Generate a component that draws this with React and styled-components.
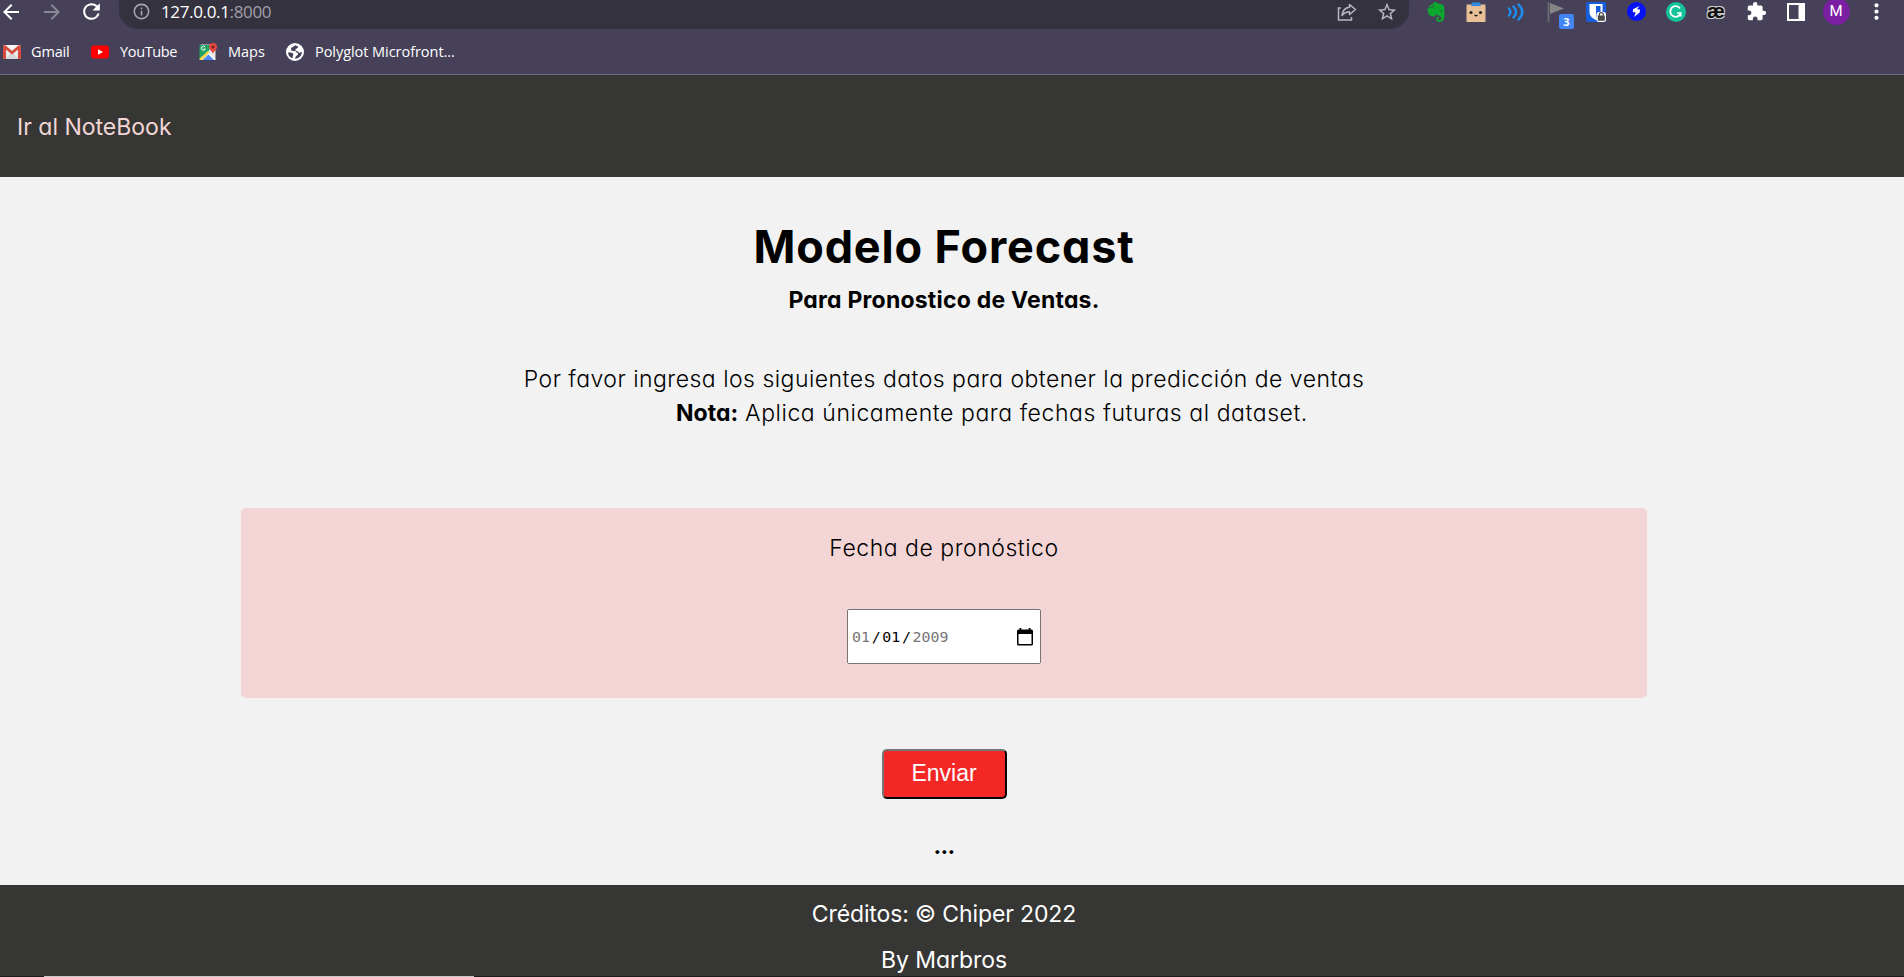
import React from "react";
import styled, { createGlobalStyle } from "styled-components";
import { MdArrowBack, MdArrowForward, MdRefresh, MdInfoOutline, MdStarBorder, MdExtension, MdMoreVert } from "react-icons/md";
import { SiEvernote } from "react-icons/si";

const Global = createGlobalStyle`
  * { box-sizing: border-box; }
  html, body { margin: 0; background: #f2f2f2; overflow: hidden; }
`;

const Page = styled.div`
  height: 977px;
  display: flex;
  flex-direction: column;
  overflow: hidden;
  font-family: Inter, "Open Sans", sans-serif;
  font-feature-settings: "cv11";
  color: #000;
`;

const Chrome = styled.div`
  height: 75px;
  flex: none;
  background: #464159;
  border-bottom: 1px solid #706c7d;
  font-family: "Open Sans", "Noto Sans", sans-serif;
  font-feature-settings: normal;
  color: #fff;
`;
const Toolbar = styled.div`
  height: 29px;
  display: flex;
  align-items: flex-start;
`;
const Cell = styled.div`
  width: ${(p) => p.$w || 40}px;
  height: 23px;
  flex: none;
  display: flex;
  align-items: center;
  justify-content: center;
  color: ${(p) => p.$color || "#fff"};
  position: relative;
  svg { flex: none; display: block; }
`;
const NavButtons = styled.div`
  width: 119px;
  display: flex;
  padding-left: 1px;
  flex: none;
`;
const Omnibox = styled.div`
  width: 1290px;
  height: 29px;
  border-radius: 0 0 20px 20px / 0 0 18px 18px;
  background: #35323f;
  display: flex;
  margin-right: 7px;
  padding: 0 2px 0 10px;
`;
const Url = styled.div`
  flex: 1;
  padding-left: 8px;
  font-size: 17px;
  line-height: 23px;
  letter-spacing: -0.35px;
  span { color: #a19fa8; }
`;
const Badge = styled.span`
  position: absolute;
  left: 23px;
  top: 14px;
  width: 15px;
  height: 15px;
  border-radius: 2px;
  background: #4285f4;
  font-size: 11px;
  font-weight: 700;
  line-height: 16px;
  text-align: center;
  color: #fff;
`;
const Avatar = styled.span`
  width: 27px;
  height: 27px;
  flex: none;
  border-radius: 50%;
  background: #7b1fa2;
  font: 15px/27px Roboto, sans-serif;
  text-align: center;
`;
const Bookmarks = styled.div`
  height: 45px;
  display: flex;
  align-items: center;
  padding: 1px 0 0 2px;
`;
const Bookmark = styled.div`
  display: flex;
  align-items: center;
  width: ${(p) => p.$w}px;
  gap: ${(p) => p.$gap || 10}px;
  font-size: 14.5px;
  line-height: 20px;
  letter-spacing: ${(p) => p.$ls || 0}px;
  white-space: nowrap;
  svg { flex: none; }
`;

const Header = styled.header`
  height: 102px;
  flex: none;
  background: #363634;
  padding: 35px 0 0 17px;
`;
const Line = styled.p`
  margin: ${(p) => p.$mt || 0}px 0 0;
  font-size: 23px;
  line-height: 34px;
  font-weight: ${(p) => p.$weight || 400};
  letter-spacing: ${(p) => p.$ls || 0}px;
  padding-left: ${(p) => p.$shift || 0}px;
  white-space: nowrap;
  text-align: center;
  b { font-weight: 700; letter-spacing: 0; }
`;
const NotebookLink = styled.a`
  display: block;
  font-size: 23px;
  line-height: 34px;
  color: #f3d6d6;
`;
const Main = styled.main`
  height: 708px;
  flex: none;
  background: #f2f2f2;
  padding: 40px 16px 0 0;
  display: flex;
  flex-direction: column;
  align-items: center;
`;
const Title = styled.h1`
  margin: 0;
  font-size: 45px;
  line-height: 60px;
  font-weight: 700;
  letter-spacing: 0.85px;
`;
const Subtitle = styled.h2`
  margin: 3px 0 0;
  font-size: 23px;
  line-height: 40px;
  font-weight: 700;
  letter-spacing: 0.22px;
`;
const Card = styled.section`
  width: 1406px;
  height: 190px;
  margin-top: 78px;
  padding-top: 23px;
  border-radius: 5px;
  background: #f3d5d5;
  display: flex;
  flex-direction: column;
  align-items: center;
`;
const DateField = styled.div`
  width: 194px;
  height: 55px;
  margin-top: 44px;
  padding: 0 7px 0 4px;
  border: 1px solid #767676;
  border-radius: 2px;
  background: #fff;
  display: flex;
  align-items: center;
  justify-content: space-between;
  font: 14.9px "DejaVu Sans Mono", monospace;
  color: #757575;
  b { font-weight: 400; color: #000; }
  i { font-style: normal; color: #000; margin: 0 1.7px; }
`;
const Submit = styled.button`
  width: 125px;
  height: 50px;
  margin-top: 51px;
  padding: 0 0 1px;
  border: 2px outset #767676;
  border-color: #767676 #37181a #37181a #767676;
  border-radius: 5px;
  background: #f42727;
  color: #fff;
  font: 23px "Liberation Sans", Arial, sans-serif;
`;
const Footer = styled.footer`
  height: 91px;
  flex: none;
  background: #363634;
  color: #fff;
  padding: 12px 16px 0 0;
`;
const Shelf = styled.div`
  height: 1px;
  flex: none;
  background: #1c1c1c;
  padding-left: 44px;
`;
const ShelfBar = styled.div`
  width: 430px;
  height: 1px;
  background: #c8c8c8;
`;

const Gmail = () => (
  <svg width="20" height="16" viewBox="0 0 20 16">
    <rect x="1" y="1" width="18" height="14" rx="1.5" fill="#ececec" />
    <path d="M3 15l6-6h2l6 6z" fill="#d8d8d8" />
    <path d="M1 3v10.500q0 1.500 1.500 1.500H4V5.500l6 5 6-5V15h1.500q1.500 0 1.500-1.500V3q0-2-2-2L10 7 3 1Q1 1 1 3z" fill="#d54b3d" />
    <path d="M4 1h12l-6 4.800z" fill="#f5f5f5" />
  </svg>
);
const YouTube = () => (
  <svg width="20" height="14" viewBox="0 0 20 14">
    <rect x="1" y="0.500" width="18" height="13" rx="3" fill="#f00" />
    <path d="M8 4.200v5.600L13 7z" fill="#fff" />
  </svg>
);
const Maps = () => (
  <svg width="18" height="18" viewBox="0 0 18 18">
    <path d="M1.500 1.500h15v15h-15z" fill="#e8e8e8" />
    <path d="M0.500 2h12L10 7.500 0.500 16z" fill="#1fa463" />
    <path d="M1.500 16.500L9 9l7.500 7.500v.500h-15z" fill="#fff" />
    <path d="M3.500 17L9.500 11.500 15 17z" fill="#4a89f3" />
    <path d="M0.500 15.500L9 8l1.500 1.500-7.500 7.500H0.500z" fill="#fed14b" />
    <path d="M14 0a4 4 0 014 4c0 3-3.200 3.700-4 7-.8-3.300-4-4-4-7a4 4 0 014-4z" fill="#e04a3f" />
    <circle cx="14" cy="4" r="1.500" fill="#7d211b" />
    <path d="M6 4A2 2 0 106.300 6H4.500" fill="none" stroke="#fff" strokeWidth="1" />
  </svg>
);
const Globe = () => (
  <svg width="18" height="18" viewBox="0 0 18 18">
    <circle cx="9" cy="9" r="9" fill="#fff" />
    <path d="M9.500 2.200L5.500 4.800c-1 1.500-.5 3 1 3.200 1.500.3 2.600-.3 3.300.6.6 1.300 2.300 1 2.300 2.400 0 1.500-3 1.600-3 4.800 3.500-.2 6.800-3 6.800-6.800-1 0-1 .7-2.300.7-1.700 0-1.200-1.700-2.900-1.700-1.200 0-1.700-1-1.100-1.800.7-1 2.600-.6 2.600-2.500z" fill="#464159" />
    <path d="M2 9.500c1.500-.2 5 .2 5.300 1.500.2 1.200-.6 1.700-.6 2.500v1.800A6.700 6.700 0 012 9.500z" fill="#464159" />
  </svg>
);
const Share = () => (
  <svg width="20" height="18" viewBox="0 0 20 18" fill="none" stroke="#b9b7bf" strokeWidth="1.500">
    <path d="M4 5H1.500v12h13v-3" />
    <path d="M12.500 1.500L18.500 6.500l-6 5V8.700C9 8.700 7 10 5 12.500 5.500 8 8 4.800 12.500 4.300z" strokeLinejoin="round" />
  </svg>
);
const BoxFace = () => (
  <svg width="20" height="20" viewBox="0 0 20 20">
    <rect x="0.500" y="2.500" width="19" height="17.500" fill="#e8bf97" />
    <path d="M6 0.500h8l1 3.500H5z" fill="#2e8ae0" />
    <circle cx="5" cy="10.500" r="1.600" fill="#222" />
    <circle cx="14.500" cy="10.500" r="1.600" fill="#222" />
    <path d="M8.500 13q1.500 1.500 3 0" fill="none" stroke="#222" strokeWidth="1.200" />
  </svg>
);
const Waves = () => (
  <svg width="18" height="18" viewBox="0 0 18 18" fill="none" stroke="#1b8ff0" strokeWidth="2.400" strokeLinecap="round">
    <path d="M2 5.500q3 3.500 0 7M6.500 3.500q5 5.500 0 11M11.500 1.500q7.500 7.500 0 15" />
  </svg>
);
const Flag = () => (
  <svg width="20" height="22" viewBox="0 0 20 22">
    <path d="M2.500 1v20" stroke="#6c6b70" strokeWidth="1.800" />
    <path d="M4 2l14 5.500L4 13z" fill="#858585" />
  </svg>
);
const Shield = () => (
  <svg width="20" height="20" viewBox="0 0 20 20">
    <rect width="20" height="20" rx="2" fill="#175ddc" />
    <path d="M3.500 2h13v8c0 4.500-3.500 6.500-6.500 8-3-1.500-6.500-3.500-6.500-8z" fill="#fff" />
    <path d="M10 4h4.500v6c0 3-2.500 4.500-4.500 5.500z" fill="#175ddc" />
    <rect x="10.500" y="10" width="9.500" height="10" rx="2.500" fill="#fff" />
    <path d="M13.300 14v-1.300a2 2 0 014 0V14" fill="none" stroke="#4b4b4b" strokeWidth="1.200" />
    <rect x="11.800" y="13.500" width="7" height="5.300" rx="0.500" fill="#4b4b4b" />
  </svg>
);
const Bolt = () => (
  <svg width="19" height="19" viewBox="0 0 19 19">
    <circle cx="9.500" cy="9.500" r="9.500" fill="#0613f5" />
    <path d="M12.500 4L6 7.200 5.800 10l3 .5L7 15l5.700-4.500.3-3-3-.2z" fill="#fff" />
  </svg>
);
const Grammar = () => (
  <svg width="20" height="20" viewBox="0 0 20 20">
    <circle cx="10" cy="10" r="10" fill="#15c39a" />
    <path d="M14 6.500A5.300 5.300 0 1014.700 11H11M14.700 10.200V14.500" fill="none" stroke="#fff" strokeWidth="1.700" />
  </svg>
);
const Panel = () => (
  <svg width="18" height="18" viewBox="0 0 18 18">
    <path d="M0 0h18v18H0zM2 2v14h9.500V2z" fill="#fff" fillRule="evenodd" />
  </svg>
);
const Calendar = () => (
  <svg width="16" height="18" viewBox="0 0 16 18">
    <path d="M2.500 0h1.800v1.500h7.400V0h1.800v1.500h1Q16 1.500 16 3v13q0 1.500-1.500 1.500h-13Q0 17.500 0 16V3q0-1.500 1.500-1.500h1zM1.500 6v10h13V6z" fillRule="evenodd" fill="#000" />
  </svg>
);
const Ligature = styled.span`
  font: 700 20px/20px "Liberation Sans", sans-serif;
  margin-top: -2px;
  color: #111;
  text-shadow: 1px 1px 0 #ccc, -1px 1px 0 #ccc, 1px -1px 0 #ccc, -1px -1px 0 #ccc;
`;

export default function App() {
  return (
    <Page>
      <Global />
      <Chrome>
        <Toolbar>
          <NavButtons>
            <Cell $w={20}><MdArrowBack size={24} /></Cell>
            <Cell $w={61} $color="#8a8796"><MdArrowForward size={24} /></Cell>
            <Cell $w={18}><MdRefresh size={25} /></Cell>
          </NavButtons>
          <Omnibox>
            <Cell $w={24} $color="#a5a3ac"><MdInfoOutline size={19} /></Cell>
            <Url>127.0.0.1<span>:8000</span></Url>
            <Cell><Share /></Cell>
            <Cell $color="#b9b7bf"><MdStarBorder size={22} /></Cell>
          </Omnibox>
          <Cell $color="#0ba82d"><SiEvernote size={20} /></Cell>
          <Cell><BoxFace /></Cell>
          <Cell><Waves /></Cell>
          <Cell><Flag /><Badge>3</Badge></Cell>
          <Cell><Shield /></Cell>
          <Cell><Bolt /></Cell>
          <Cell><Grammar /></Cell>
          <Cell><Ligature>æ</Ligature></Cell>
          <Cell><MdExtension size={21} /></Cell>
          <Cell><Panel /></Cell>
          <Cell><Avatar>M</Avatar></Cell>
          <Cell><MdMoreVert size={25} /></Cell>
        </Toolbar>
        <Bookmarks>
          <Bookmark $w={88} $gap={9} $ls={-0.15}><Gmail />Gmail</Bookmark>
          <Bookmark $w={109} $ls={-0.35}><YouTube />YouTube</Bookmark>
          <Bookmark $w={87} $gap={11}><Maps />Maps</Bookmark>
          <Bookmark $w={200} $gap={11} $ls={-0.05}><Globe />Polyglot Microfront...</Bookmark>
        </Bookmarks>
      </Chrome>
      <Header>
        <NotebookLink>Ir al NoteBook</NotebookLink>
      </Header>
      <Main>
        <Title>Modelo Forecast</Title>
        <Subtitle>Para Pronostico de Ventas.</Subtitle>
        <Line $mt={42} $weight={360} $ls={0.48}>Por favor ingresa los siguientes datos para obtener la predicción de ventas</Line>
        <Line $shift={96} $weight={360} $ls={0.56}><b>Nota:</b> Aplica únicamente para fechas futuras al dataset.</Line>
        <Card>
          <Line $weight={360} $ls={0.52}>Fecha de pronóstico</Line>
          <DateField>
            <span>01<i>/</i><b>01</b><i>/</i>2009</span>
            <Calendar />
          </DateField>
        </Card>
        <Submit>Enviar</Submit>
        <Line $mt={30} $weight={700} $ls={-0.6}>...</Line>
      </Main>
      <Footer>
        <Line $ls={-0.12}>Créditos: © Chiper 2022</Line>
        <Line $mt={12} $ls={-0.05}>By Marbros</Line>
      </Footer>
      <Shelf><ShelfBar /></Shelf>
    </Page>
  );
}
